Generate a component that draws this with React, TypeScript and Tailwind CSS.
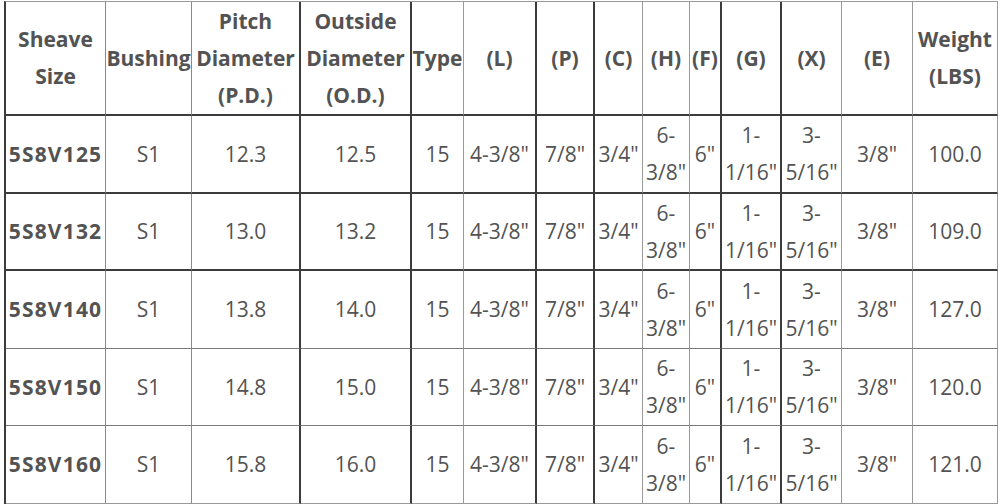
import React from "react";

type Cell = string[];

const headers: Cell[] = [
  ["Sheave", "Size"],
  ["Bushing"],
  ["Pitch", "Diameter", "(P.D.)"],
  ["Outside", "Diameter", "(O.D.)"],
  ["Type"],
  ["(L)"],
  ["(P)"],
  ["(C)"],
  ["(H)"],
  ["(F)"],
  ["(G)"],
  ["(X)"],
  ["(E)"],
  ["Weight", "(LBS)"],
];

const rows: [string, string, string, string, string][] = [
  ["5S8V125", "S1", "12.3", "12.5", "100.0"],
  ["5S8V132", "S1", "13.0", "13.2", "109.0"],
  ["5S8V140", "S1", "13.8", "14.0", "127.0"],
  ["5S8V150", "S1", "14.8", "15.0", "120.0"],
  ["5S8V160", "S1", "15.8", "16.0", "121.0"],
];

const colBorder = [
  "border-r border-r-[#8a8a8a]",
  "border-r border-r-[#8a8a8a]",
  "border-r-2 border-r-[#3c3c3c]",
  "border-r-2 border-r-[#3c3c3c]",
  "border-r border-r-[#9a9a9a]",
  "border-r-2 border-r-[#3c3c3c]",
  "border-r-2 border-r-[#3c3c3c]",
  "border-r border-r-[#9a9a9a]",
  "border-r border-r-[#9a9a9a]",
  "border-r-2 border-r-[#3c3c3c]",
  "border-r-2 border-r-[#3c3c3c]",
  "border-r border-r-[#9a9a9a]",
  "border-r border-r-[#9a9a9a]",
  "border-r border-r-[#9a9a9a]",
];

const rowBorder = [
  "border-b-2 border-b-[#3c3c3c]",
  "border-b-2 border-b-[#3c3c3c]",
  "border-b-2 border-b-[#3c3c3c]",
  "border-b border-b-[#7a7a7a]",
  "border-b border-b-[#7a7a7a]",
  "border-b border-b-[#9a9a9a]",
];

function Lines({ lines }: { lines: string[] }) {
  return (
    <div className="flex flex-col items-center">
      {lines.map((l, i) => (
        <span key={i} className="whitespace-nowrap">
          {l}
        </span>
      ))}
    </div>
  );
}

export default function App() {
  const dataCells = (r: (typeof rows)[number]): Cell[] => [
    [r[0]],
    [r[1]],
    [r[2]],
    [r[3]],
    ["15"],
    ['4-3/8"'],
    ['7/8"'],
    ['3/4"'],
    ["6-", '3/8"'],
    ['6"'],
    ["1-", '1/16"'],
    ["3-", '5/16"'],
    ['3/8"'],
    [r[4]],
  ];

  return (
    <div
      className="w-[1000px] h-[504px] bg-white overflow-hidden pt-px pl-1 text-[21px] leading-[37px] text-[#535353]"
      style={{ fontFamily: '"Open Sans", "Noto Sans", sans-serif' }}
    >
      <div className="grid w-[994px] grid-cols-[100px_86px_109px_111px_52px_73px_58px_48px_47px_32px_60px_60px_71px_85px] grid-rows-[114px_78px_77px_78px_77px_78px] border-l-2 border-l-[#3c3c3c] border-t border-t-[#9a9a9a]">
        {headers.map((h, ci) => (
          <div
            key={"h" + ci}
            className={`flex items-center justify-center font-bold ${colBorder[ci]} ${rowBorder[0]}`}
          >
            <Lines lines={h} />
          </div>
        ))}
        {rows.map((r, ri) =>
          dataCells(r).map((c, ci) => (
            <div
              key={ri + "-" + ci}
              className={`flex items-center justify-center ${ci === 0 ? "font-bold tracking-[1.2px]" : ""} ${colBorder[ci]} ${rowBorder[ri + 1]}`}
            >
              <Lines lines={c} />
            </div>
          ))
        )}
      </div>
    </div>
  );
}
